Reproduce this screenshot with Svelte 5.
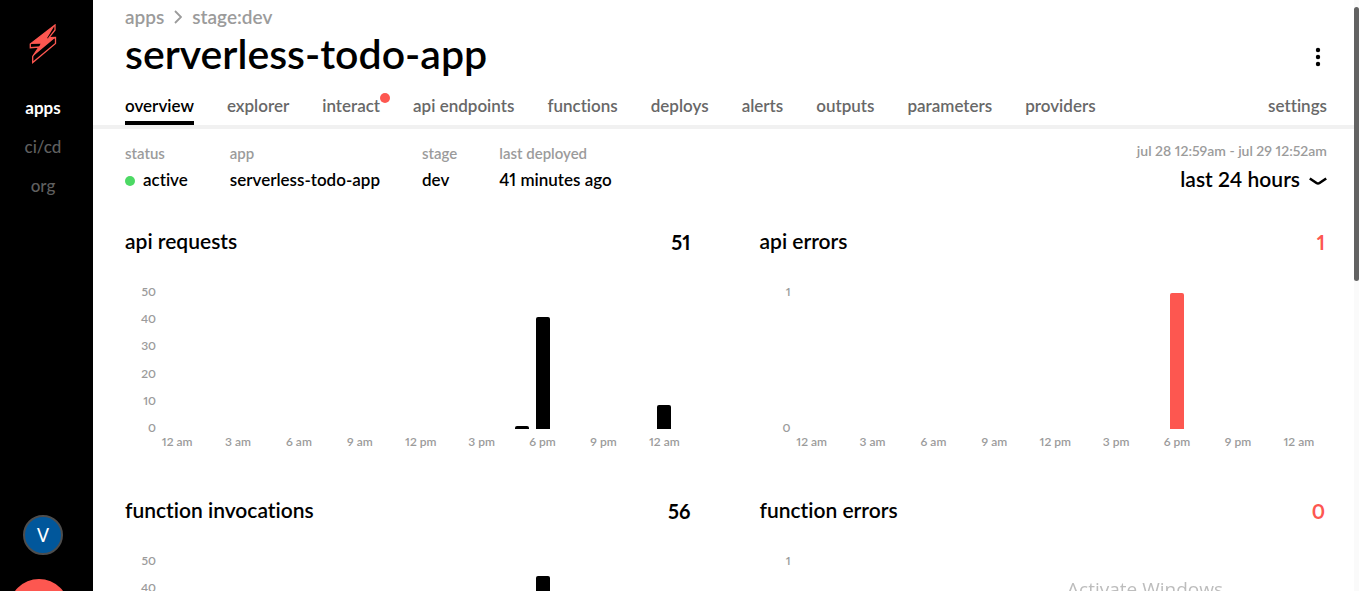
<script>
  const sections = ['apps', 'ci/cd', 'org'];
  const tabs = ['overview', 'explorer', 'interact', 'api endpoints', 'functions', 'deploys', 'alerts', 'outputs', 'parameters', 'providers'];
  const facts = [
    { label: 'status', value: 'active', dot: true },
    { label: 'app', value: 'serverless-todo-app' },
    { label: 'stage', value: 'dev' },
    { label: 'last deployed', value: '41 minutes ago' }
  ];
  const hours = ['12 am', '3 am', '6 am', '9 am', '12 pm', '3 pm', '6 pm', '9 pm', '12 am'];
  const fifty = [50, 40, 30, 20, 10, 0];
  // Each bar is [hour since the range began, count].
  const charts = [
    { title: 'api requests', total: 51, scale: fifty, bars: [[17, 1], [18, 41], [24, 9]] },
    { title: 'api errors', total: 1, scale: [1, 0], bars: [[18, 1]], error: true },
    { title: 'function invocations', total: 56, scale: fifty, bars: [[17, 1], [18, 45], [24, 10]] },
    { title: 'function errors', total: 0, scale: [1, 0], bars: [], error: true }
  ];
</script>

<div class="shell">
  <aside>
    <a class="logo" href="#home" aria-label="home">
      <svg viewBox="0 0 28 40" width="28" height="40">
        <path d="M26 1 1.300 20v3.700l8.700-.7-6.300 9.500v6L26.500 19.500v-6l-6.500.2L26 6z" fill="none" stroke="#fd5750" stroke-width="1.300" />
        <path d="M26 1 1.300 20l10.200-.3-1.500 3.300-6.300 9.500L26.500 13.500l-8.500.8z" fill="#fd5750" />
      </svg>
    </a>
    <nav class="sections">
      {#each sections as s, i}<a href="#{s}" class:current={i === 0}>{s}</a>{/each}
    </nav>
    <button class="avatar">V</button>
    <button class="chat" aria-label="chat"></button>
  </aside>

  <main>
    <header>
      <div class="crumbs">
        <a href="#apps">apps</a>
        <svg viewBox="0 0 8 14" width="8" height="14"><path d="M1 1l6 6-6 6" fill="none" stroke="#9b9b9b" stroke-width="1.800" /></svg>
        <a href="#stage">stage:dev</a>
      </div>
      <div class="heading">
        <h1>serverless-todo-app</h1>
        <button class="more" aria-label="more">
          <svg viewBox="0 0 6 20" width="6" height="20"><circle cx="3" cy="3" r="2.200" /><circle cx="3" cy="10" r="2.200" /><circle cx="3" cy="17" r="2.200" /></svg>
        </button>
      </div>
      <nav class="tabs">
        {#each tabs as t, i}<a href="#{t}" class:current={i === 0} class:badge={t === 'interact'}>{t}</a>{/each}
        <a class="settings" href="#settings">settings</a>
      </nav>
    </header>

    <div class="summary">
      <dl>
        {#each facts as f}
          <div>
            <dt>{f.label}</dt>
            <dd>{#if f.dot}<span class="dot"></span>{/if}{f.value}</dd>
          </div>
        {/each}
      </dl>
      <div class="range">
        <span>jul 28 12:59am - jul 29 12:52am</span>
        <button>last 24 hours
          <svg viewBox="0 0 18 10" width="18" height="10"><path d="M.8 2.500 7.500 7q1.500 1 3 0l6.700-4.500" fill="none" stroke="#000" stroke-width="2.600" /></svg>
        </button>
      </div>
    </div>

    <div class="charts">
      {#each charts as c}
        <section class:error={c.error}>
          <div class="title"><h2>{c.title}</h2><strong>{c.total}</strong></div>
          <div class="chart">
            <div class="scale">{#each c.scale as n}<span>{n}</span>{/each}</div>
            <div class="plot">
              {#each c.bars as [hour, count]}
                <i style="grid-column: {hour + 1}; height: {(count / c.scale[0]) * 100}%"></i>
              {/each}
            </div>
            <div class="hours">{#each hours as h, i}<span style="grid-column: {i * 3 + 1}">{h}</span>{/each}</div>
          </div>
        </section>
      {/each}
    </div>
    <p class="watermark">Activate Windows</p>
  </main>
  <div class="track"><div class="thumb"></div></div>
</div>

<style>
  :global(body) { margin: 0; background: #fff; }
  .shell { display: flex; height: 100vh; overflow: hidden; font-family: Lato, sans-serif; font-weight: 600; font-variant-ligatures: none; font-variant-numeric: proportional-nums; color: #000; }
  a { color: inherit; text-decoration: none; }
  button { font: inherit; font-variant-numeric: inherit; color: inherit; background: none; border: 0; padding: 0; cursor: pointer; }
  svg { display: block; }
  aside { box-sizing: border-box; flex: 0 0 93px; background: #000; display: flex; flex-direction: column; align-items: center; padding: 24px 7px 0 0; position: relative; }
  .sections { display: flex; flex-direction: column; align-items: center; gap: 19px; margin-top: 34px; font-size: 17px; line-height: 20px; color: #5f5f5f; font-weight: 500; }
  .sections .current { color: #fff; font-weight: 700; }
  .avatar { box-sizing: border-box; width: 40px; height: 40px; border-radius: 50%; border: 2px solid #4d4d4d; background: #01579b; color: #fff; font: 400 20px "Noto Sans", sans-serif; line-height: 36px; margin-top: auto; margin-bottom: 36px; }
  .chat { position: absolute; left: 9px; bottom: -48px; width: 60px; height: 60px; border-radius: 50%; background: #fd5750; }
  main { flex: 1; min-width: 0; overflow-y: auto; scrollbar-width: none; }
  header { border-bottom: 4px solid #f1f1f1; padding: 6px 27px 0 32px; }
  .crumbs { display: flex; align-items: center; gap: 10px; font-size: 19px; line-height: 22px; color: #9b9b9b; }
  .heading { display: flex; justify-content: space-between; align-items: center; }
  h1 { margin: 0; font-size: 41px; line-height: 52px; font-weight: 600; }
  .more { padding: 6px 6px 0; }
  .tabs { display: flex; gap: 33px; font-size: 17px; line-height: 20px; color: #686868; padding-top: 16px; }
  .tabs a { padding-bottom: 5px; border-bottom: 4px solid transparent; position: relative; white-space: nowrap; }
  .tabs .current { color: #000; border-color: #000; }
  .badge::after { content: ""; position: absolute; right: -10px; top: -3px; width: 10px; height: 10px; border-radius: 50%; background: #fd5750; }
  .tabs .settings { margin-left: auto; }
  .summary { display: flex; justify-content: space-between; padding: 12px 27px 0 32px; }
  dl { display: flex; margin: 3px 0 0; gap: 42px; }
  dt { font-size: 15px; line-height: 18px; color: #9b9b9b; }
  dd { margin: 7px 0 0; display: flex; align-items: center; gap: 8px; font-size: 17px; line-height: 22px; }
  .dot { width: 10px; height: 10px; border-radius: 50%; background: #4cd964; margin-top: 2px; }
  .range { display: flex; flex-direction: column; align-items: flex-end; font-size: 14px; line-height: 20px; color: #9b9b9b; }
  .range button { display: flex; align-items: center; gap: 9px; margin-top: 6px; font-size: 21px; line-height: 24px; color: #000; }
  .range svg { margin-top: 4px; }
  .charts { display: grid; grid-template-columns: 1fr 1fr; gap: 49px 67px; padding: 38px 27px 0 32px; }
  .title { display: flex; justify-content: space-between; align-items: flex-start; padding-right: 2px; line-height: 26px; }
  h2 { margin: 0; font-size: 21px; font-weight: 600; line-height: 24px; }
  strong { font-size: 20px; font-weight: 700; }
  .error strong { color: #fd5750; }
  .chart { display: grid; grid-template-columns: 31px 1fr; column-gap: 11px; padding: 38px 18px 0 0; font-size: 12px; line-height: 14px; color: #9b9b9b; }
  .scale { display: flex; flex-direction: column; justify-content: space-between; text-align: right; margin: -8px 0 -6px; height: 150px; }
  .plot, .hours { display: grid; grid-template-columns: repeat(25, minmax(0, 1fr)); }
  .plot { height: 136px; grid-template-rows: 136px; align-items: end; justify-items: center; }
  .plot i { grid-row: 1; width: 14px; background: #000; border-radius: 2px 2px 0 0; }
  .error i { background: #fd5750; }
  .hours { grid-column: 2; padding-top: 6px; }
  .hours span { display: flex; justify-content: center; white-space: nowrap; }
  .watermark { position: fixed; right: 136px; bottom: -12px; margin: 0; font: 400 19px/28px "Open Sans", sans-serif; color: #bdbdbd; }
  .track { flex: 0 0 5px; background: #fafafa; padding-top: 7px; box-sizing: border-box; }
  .thumb { height: 47%; background: #636363; border-radius: 3px; }
</style>
